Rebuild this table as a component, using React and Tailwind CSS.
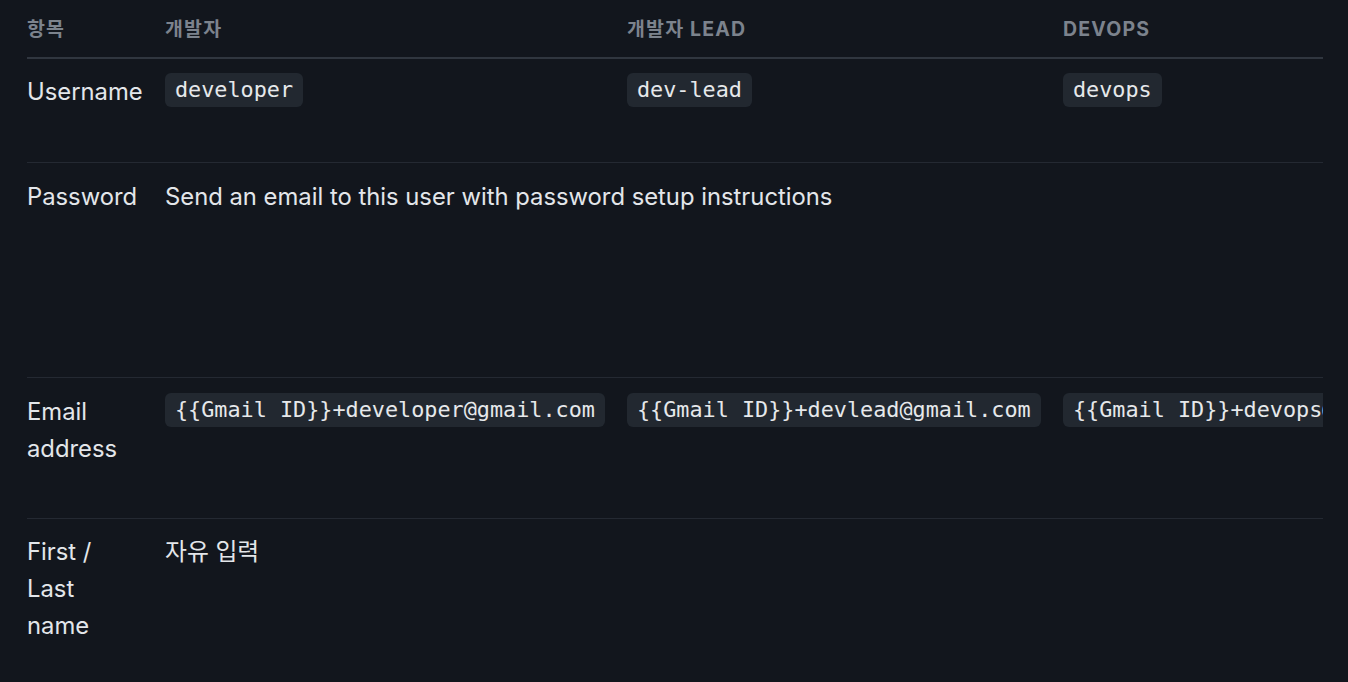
import React from "react";

const sans = { fontFamily: '"Inter", "Noto Sans CJK KR", sans-serif' };

function Code({ children }) {
  return (
    <code className="inline-block whitespace-nowrap rounded-[6px] bg-[#222830] px-[10px] text-[21.8px] leading-[34px] text-[#e6e8eb] [font-family:'DejaVu_Sans_Mono','Noto_Sans_CJK_KR',monospace] align-[8px]">
      {children}
    </code>
  );
}

export default function App() {
  return (
    <div className="min-h-[682px] w-full bg-[#12161d] text-[#e3e6ea]" style={sans}>
      <div className="ml-[27px] w-[1296px] overflow-hidden">
        <table className="table-fixed border-collapse text-left" style={{ width: 1460 }}>
          <colgroup>
            <col style={{ width: 138 }} />
            <col style={{ width: 462 }} />
            <col style={{ width: 436 }} />
            <col style={{ width: 424 }} />
          </colgroup>
          <thead>
            <tr className="border-b-2 border-[#30363f]">
              {["항목", "개발자", "개발자 LEAD", "DEVOPS"].map((h) => (
                <th
                  key={h}
                  className="h-[58px] pr-[22px] pt-[2px] align-middle text-[19.5px] font-bold uppercase tracking-[0.06em] text-[#7c838d]"
                >
                  {h}
                </th>
              ))}
            </tr>
          </thead>
          <tbody className="text-[23.8px] leading-[37px]">
            <tr className="h-[104px] border-b border-[#242932]">
              <td className="whitespace-nowrap pr-[22px] pt-[14px] align-top">Username</td>
              <td className="pr-[22px] pt-[14px] align-top"><Code>developer</Code></td>
              <td className="pr-[22px] pt-[14px] align-top"><Code>dev-lead</Code></td>
              <td className="pr-[22px] pt-[14px] align-top"><Code>devops</Code></td>
            </tr>
            <tr className="h-[215px] border-b border-[#242932]">
              <td className="whitespace-nowrap pr-[22px] pt-[15px] align-top">Password</td>
              <td colSpan={3} className="pr-[22px] pt-[15px] align-top">
                Send an email to this user with password setup instructions
              </td>
            </tr>
            <tr className="h-[141px] border-b border-[#242932]">
              <td className="pr-[36px] pt-[15px] align-top">Email address</td>
              <td className="pr-[22px] pt-[15px] align-top"><Code>{"{{Gmail ID}}+developer@gmail.com"}</Code></td>
              <td className="pr-[22px] pt-[15px] align-top"><Code>{"{{Gmail ID}}+devlead@gmail.com"}</Code></td>
              <td className="pr-[22px] pt-[15px] align-top"><Code>{"{{Gmail ID}}+devops@gmail.com"}</Code></td>
            </tr>
            <tr className="h-[164px]">
              <td className="pr-[36px] pt-[14px] align-top">First / Last name</td>
              <td colSpan={3} className="pr-[22px] pt-[14px] align-top">자유 입력</td>
            </tr>
          </tbody>
        </table>
      </div>
    </div>
  );
}
